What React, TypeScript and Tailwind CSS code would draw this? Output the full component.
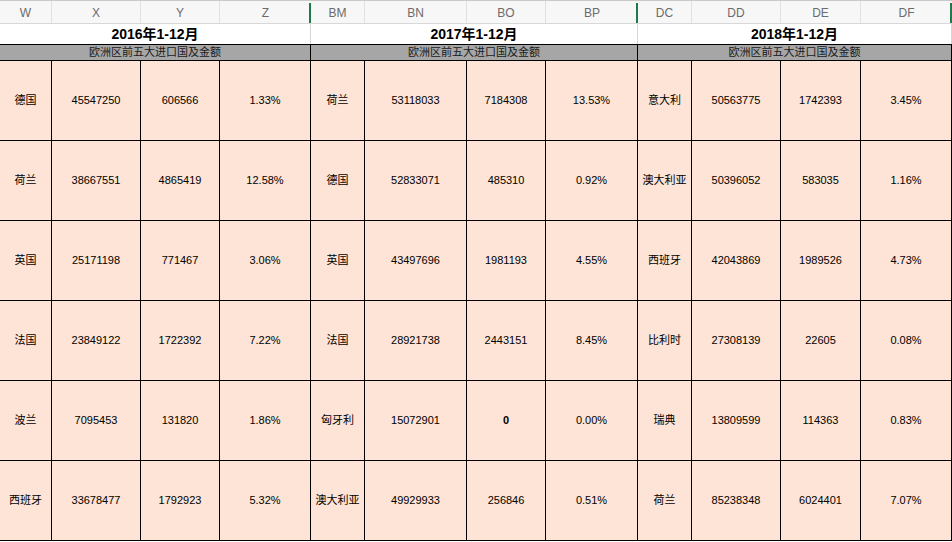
import React from "react";

type Row = [string, string, string, string];

const groups: { cols: string[]; title: string; widths: number[]; rows: Row[] }[] = [
  {
    cols: ["W", "X", "Y", "Z"],
    title: "2016年1-12月",
    widths: [52, 89, 79, 91],
    rows: [
      ["德国", "45547250", "606566", "1.33%"],
      ["荷兰", "38667551", "4865419", "12.58%"],
      ["英国", "25171198", "771467", "3.06%"],
      ["法国", "23849122", "1722392", "7.22%"],
      ["波兰", "7095453", "131820", "1.86%"],
      ["西班牙", "33678477", "1792923", "5.32%"],
    ],
  },
  {
    cols: ["BM", "BN", "BO", "BP"],
    title: "2017年1-12月",
    widths: [54, 102, 79, 92],
    rows: [
      ["荷兰", "53118033", "7184308", "13.53%"],
      ["德国", "52833071", "485310", "0.92%"],
      ["英国", "43497696", "1981193", "4.55%"],
      ["法国", "28921738", "2443151", "8.45%"],
      ["匈牙利", "15072901", "0", "0.00%"],
      ["澳大利亚", "49929933", "256846", "0.51%"],
    ],
  },
  {
    cols: ["DC", "DD", "DE", "DF"],
    title: "2018年1-12月",
    widths: [54, 89, 80, 91],
    rows: [
      ["意大利", "50563775", "1742393", "3.45%"],
      ["澳大利亚", "50396052", "583035", "1.16%"],
      ["西班牙", "42043869", "1989526", "4.73%"],
      ["比利时", "27308139", "22605", "0.08%"],
      ["瑞典", "13809599", "114363", "0.83%"],
      ["荷兰", "85238348", "6024401", "7.07%"],
    ],
  },
];

const font = { fontFamily: '"Liberation Sans", "Noto Sans CJK SC", sans-serif' };

function Group({ g }: { g: (typeof groups)[number] }) {
  const cols = g.widths.map((w) => `${w}px`).join(" ");
  return (
    <div className="flex flex-col" style={{ width: g.widths.reduce((a, b) => a + b, 0) }}>
      {/* column letters */}
      <div className="relative grid h-[24px] border-t border-[#c9c9c9] bg-[#f7f7f7]" style={{ gridTemplateColumns: cols }}>
        {g.cols.map((c, i) => (
          <div
            key={c}
            className={
              "flex items-center justify-center text-[12px] text-[#6b6b6b] " +
              (i < 3 ? "border-r border-[#e0e0e0]" : "")
            }
          >
            {c}
          </div>
        ))}
        <div className="absolute right-0 top-[2px] h-[21px] w-[2px] bg-[#1e7a4c]" />
        <div className="absolute bottom-0 left-0 right-0 h-px bg-[#d8d8d8]" />
      </div>
      {/* title */}
      <div className="flex h-[20px] items-center justify-center border-r border-[#d6d6d6] bg-white text-[14px] font-bold text-black">
        {g.title}
      </div>
      {/* subtitle */}
      <div className="flex h-[17px] items-center justify-center border-y border-r border-black bg-[#a6a6a6] text-[11px] text-[#1a1a1a]">
        欧洲区前五大进口国及金额
      </div>
      {/* data */}
      <div className="grid bg-[#fde4d6]" style={{ gridTemplateColumns: cols, gridTemplateRows: "repeat(6, 80px)" }}>
        {g.rows.map((r, ri) =>
          r.map((v, ci) => (
            <div
              key={ri + "-" + ci}
              className={
                "flex items-center justify-center border-r border-b border-black text-[11px] text-black " +
                (v === "0" ? "font-bold" : "")
              }
            >
              {v}
            </div>
          ))
        )}
      </div>
    </div>
  );
}

export default function App() {
  return (
    <div className="flex h-[542px] w-[952px] overflow-hidden bg-white" style={font}>
      {groups.map((g) => (
        <Group key={g.title} g={g} />
      ))}
    </div>
  );
}
